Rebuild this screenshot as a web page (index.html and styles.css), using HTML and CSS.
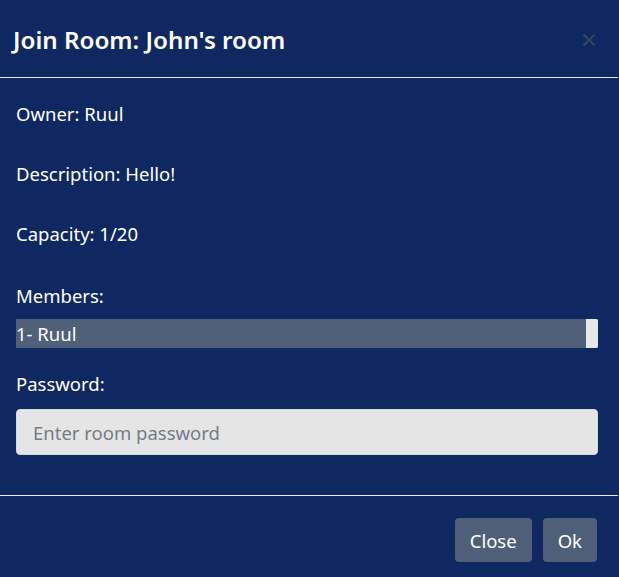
FILE: index.html
```html
<!DOCTYPE html>
<html lang="en">
<head>
<meta charset="utf-8">
<title>Join Room</title>
<link rel="stylesheet" href="styles.css">
</head>
<body>
<div class="modal">
  <div class="modal-header">
    <h5 class="modal-title">Join Room: John's room</h5>
    <button class="btn-close" aria-label="Close">
      <svg width="14" height="14" viewBox="0 0 14 14"><path d="M1.5 1.5L12.5 12.5M12.5 1.5L1.5 12.5" stroke="#3b475c" stroke-width="2" fill="none"/></svg>
    </button>
  </div>
  <div class="modal-body">
    <p class="info">Owner: Ruul</p>
    <p class="info">Description: Hello!</p>
    <p class="info">Capacity: 1/20</p>
    <p class="label">Members:</p>
    <div class="members">
      <div class="member">1- Ruul</div>
      <div class="scroll"></div>
    </div>
    <p class="label pw">Password:</p>
    <input class="input" type="password" placeholder="Enter room password">
  </div>
  <div class="modal-footer">
    <button class="btn">Close</button>
    <button class="btn">Ok</button>
  </div>
</div>
</body>
</html>
```
FILE: styles.css
```css
html, body {
  margin: 0;
  padding: 0;
  background: #0f2862;
}
body {
  font-family: "Noto Sans", "Open Sans", sans-serif;
  color: #ffffff;
  font-size: 18.5px;
}
.modal {
  width: 618px;
  height: 577px;
  display: flex;
  flex-direction: column;
  background: #0f2862;
}
.modal-header {
  height: 78px;
  box-sizing: border-box;
  display: flex;
  align-items: center;
  justify-content: space-between;
  padding: 0 22px 0 13px;
  border-bottom: 1px solid #e8e8ee;
}
.modal-title {
  margin: 0;
  font-size: 24.2px;
  font-weight: 600;
  line-height: 1;
  padding-top: 4px;
}
.btn-close {
  background: none;
  border: 0;
  padding: 0;
  width: 14px;
  height: 14px;
  display: flex;
  margin-top: 2px;
}
.modal-body {
  padding: 0 20px 0 16px;
  height: 417px;
  box-sizing: border-box;
  display: flex;
  flex-direction: column;
}
.info {
  margin: 0;
  height: 60px;
  line-height: 24px;
  padding-top: 24px;
  box-sizing: border-box;
}
.label {
  margin: 0;
  height: 24px;
  line-height: 24px;
  margin-top: 26px;
}
.members {
  margin-top: 11px;
  height: 29px;
  display: flex;
  background: #506078;
}
.member {
  flex: 1;
  line-height: 30px;
}
.scroll {
  width: 12px;
  background: #e8e8e8;
  border-radius: 0 2px 2px 0;
}
.pw {
  margin-top: 24px;
}
.input {
  margin-top: 13px;
  height: 46px;
  box-sizing: border-box;
  width: 100%;
  background: #e5e5e5;
  border: 1px solid #d8d8d8;
  border-radius: 4px;
  padding: 0 16px;
  font-family: inherit;
  font-size: 18.5px;
  color: #333;
}
.input::placeholder {
  color: #737d88;
}
.modal-footer {
  border-top: 1px solid #e8e8ee;
  flex: 1;
  display: flex;
  justify-content: flex-end;
  align-items: flex-start;
  gap: 11px;
  padding: 22px 21px 0 0;
}
.btn {
  height: 44px;
  background: #4f5f77;
  color: #fff;
  border: 0;
  border-radius: 4px;
  font-family: inherit;
  font-size: 18.5px;
  padding: 0 15px;
}
```
